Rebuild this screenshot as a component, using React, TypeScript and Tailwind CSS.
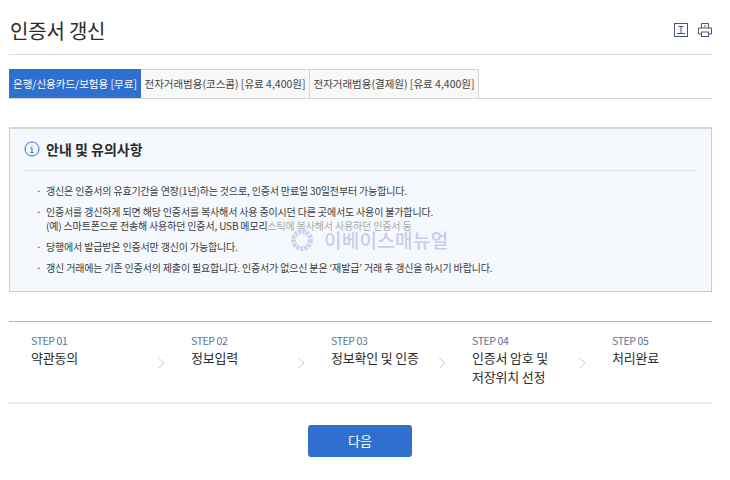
import React from 'react'

const font = { fontFamily: '"Noto Sans CJK KR", "Noto Sans", sans-serif' }

const tabs = [
    { label: '은행/신용카드/보험용 [무료]', active: true, width: 'w-[132px]' },
    { label: '전자거래범용(코스콤) [유료 4,400원]', active: false, width: 'w-[169px]' },
    { label: '전자거래범용(결제원) [유료 4,400원]', active: false, width: 'w-[169px]' },
]

const steps = [
    { no: 'STEP 01', lines: ['약관동의'], width: 'w-[182px] pl-[22px]' },
    { no: 'STEP 02', lines: ['정보입력'], width: 'w-[140px]' },
    { no: 'STEP 03', lines: ['정보확인 및 인증'], width: 'w-[141px]' },
    { no: 'STEP 04', lines: ['인증서 암호 및', '저장위치 선정'], width: 'w-[140px]' },
    { no: 'STEP 05', lines: ['처리완료'], width: 'flex-1', last: true },
]

const Chevron = () => (
    <svg width="8" height="12" viewBox="0 0 8 12" fill="none" stroke="#c8c8c8" strokeWidth="1" className="absolute right-[26px] top-[35px]">
        <path d="M1 0.5l6 5.5-6 5.5" />
    </svg>
)

const Note = ({ children }: { children: React.ReactNode }) => (
    <li className="flex pl-[12px] whitespace-nowrap tracking-[-0.16px]">
        <span className="w-[10px]">·</span>
        <div>{children}</div>
    </li>
)

const App = () => {
    return (
        <main className="relative w-[730px] h-[480px] bg-white overflow-hidden pl-[9px] pr-[18px] text-[#333]" style={font}>
            <div className="flex justify-between items-center h-[55px] pt-[8px] border-b border-[#dcdcdc]">
                <h1 className="text-[20px] leading-[30px] font-normal tracking-[-0.2px] text-[#2b2b2b] pl-[1px]">인증서 갱신</h1>
                <div className="flex items-center gap-[10px] -mt-[2px]">
                    <svg width="14" height="14" viewBox="0 0 14 14" fill="none" stroke="#46566e" strokeWidth="1">
                        <rect x="0.5" y="0.5" width="13" height="13" />
                        <path d="M4.5 3.5h5M7 3.5v6.5M3 10.5h8" />
                    </svg>
                    <svg width="14" height="14" viewBox="0 0 14 14" fill="none" stroke="#46566e" strokeWidth="1">
                        <path d="M3.5 5V0.5h7V5M3.5 11H0.5V5h13v6h-3" />
                        <rect x="3.5" y="9" width="7" height="4.5" />
                        <path d="M6 3h2" />
                    </svg>
                </div>
            </div>

            <div className="flex mt-[14px] h-[30px] border-b border-[#d5d5d5]">
                {tabs.map((tab) => (
                    <div
                        key={tab.label}
                        className={`${tab.width} flex items-center justify-center text-[10.5px] whitespace-nowrap ${tab.active ? 'bg-[#2f6fcf] text-white' : 'bg-[#f8f8f8] text-[#444] border-t border-r border-[#d5d5d5]'}`}
                    >
                        {tab.label}
                    </div>
                ))}
            </div>

            <section className="mt-[28px] h-[165px] border border-[#c9cdd2] border-t-2 border-t-[#d5d8dc] bg-[#f5f9fd] px-[14px]">
                <div className="flex items-center gap-[6px] h-[42px] pb-[1px] border-b border-[#dfe3e6] mr-[1px]">
                    <svg width="16" height="16" viewBox="0 0 16 16" fill="none" stroke="#2f6fcf" strokeWidth="1">
                        <circle cx="8" cy="8" r="7" />
                        <path d="M6.5 7h1.5v4.5M6.5 11.5h3M8 4.2v1.2" />
                    </svg>
                    <h2 className="text-[14px] font-bold text-[#2b2b2b]">안내 및 유의사항</h2>
                </div>
                <ul className="mt-[13px] flex flex-col gap-[7px] text-[10px] leading-[14px] text-[#3a3a3a]">
                    <Note>갱신은 인증서의 유효기간을 연장(1년)하는 것으로, 인증서 만료일 30일전부터 가능합니다.</Note>
                    <Note>
                        <p>인증서를 갱신하게 되면 해당 인증서를 복사해서 사용 중이시던 다른 곳에서도 사용이 불가합니다.</p>
                        <p>(예) 스마트폰으로 전송해 사용하던 인증서, USB 메모리<span className="text-[#a8a8a8]">스틱에 복사해서 사용하던 인증서 등</span></p>
                    </Note>
                    <Note>당행에서 발급받은 인증서만 갱신이 가능합니다.</Note>
                    <Note>갱신 거래에는 기존 인증서의 제출이 필요합니다. 인증서가 없으신 분은 ‘재발급’ 거래 후 갱신을 하시기 바랍니다.</Note>
                </ul>
            </section>

            <div className="absolute left-[290px] top-[228px] flex items-center gap-[10px]">
                <svg width="24" height="24" viewBox="0 0 24 24" fill="none" stroke="#cfd0f2" strokeWidth="5" strokeDasharray="3 1">
                    <circle cx="12" cy="12" r="8.5" />
                </svg>
                <span className="text-[19px] leading-[24px] font-medium tracking-[0.3px] text-[#c8cbef]">이베이스매뉴얼</span>
            </div>

            <div className="flex mt-[29px] h-[83px] border-t border-t-[#b4b4b4] border-b-2 border-b-[#eeeeee]">
                {steps.map((step) => (
                    <div key={step.no} className={`relative ${step.width} pt-[12px]`}>
                        <p className="text-[10.5px] leading-[14px] text-[#5a7396] tracking-[-0.4px]">{step.no}</p>
                        <div className="text-[13px] leading-[19px] tracking-[-0.2px] text-[#2b2b2b]">
                            {step.lines.map((line) => <p key={line}>{line}</p>)}
                        </div>
                        {!step.last && <Chevron />}
                    </div>
                ))}
            </div>

            <div className="flex justify-center mt-[21px] pr-[1px]">
                <button className="w-[104px] h-[32px] rounded-[3px] bg-[#2f6fcf] text-white text-[13px]">다음</button>
            </div>
        </main>
    )
}

export default App
